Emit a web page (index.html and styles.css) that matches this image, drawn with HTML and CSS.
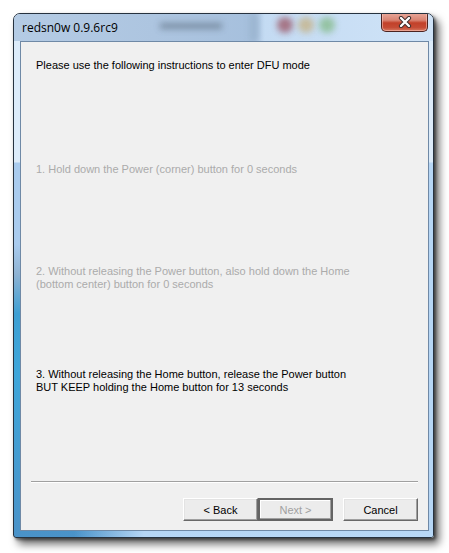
FILE: index.html
```html
<!DOCTYPE html>
<html>
<head>
<meta charset="utf-8">
<link rel="stylesheet" href="styles.css">
</head>
<body>
<div class="window">
  <div class="titlebar">
    <div class="glass">
      <span class="blur-stripe"></span>
      <span class="blur-text"></span>
      <span class="blur-dot dot-r"></span>
      <span class="blur-dot dot-y"></span>
      <span class="blur-dot dot-g"></span>
    </div>
    <span class="title">redsn0w 0.9.6rc9</span>
    <div class="close">
      <svg width="18" height="12" viewBox="0 0 18 12">
        <path d="M5 2 L13 10 M13 2 L5 10" stroke="#3b2a2a" stroke-width="4.2" stroke-linecap="round"/>
        <path d="M5 2 L13 10 M13 2 L5 10" stroke="#ffffff" stroke-width="2.4" stroke-linecap="round"/>
      </svg>
    </div>
  </div>
  <div class="client">
    <p class="line intro">Please use the following instructions to enter DFU mode</p>
    <p class="line step1 dim">1. Hold down the Power (corner) button for 0 seconds</p>
    <p class="line step2 dim">2. Without releasing the Power button, also hold down the Home<br>(bottom center) button for 0 seconds</p>
    <p class="line step3">3. Without releasing the Home button, release the Power button<br>BUT KEEP holding the Home button for 13 seconds</p>
    <div class="spacer"></div>
    <div class="sep"></div>
    <div class="buttons">
      <button class="btn">&lt; Back</button>
      <button class="btn default" disabled>Next &gt;</button>
      <button class="btn cancel">Cancel</button>
    </div>
  </div>
</div>
</body>
</html>
```

FILE: styles.css
```css
html, body {
  margin: 0;
  padding: 0;
  background: #ffffff;
}
body {
  width: 449px;
  height: 553px;
  overflow: hidden;
}
.window {
  position: relative;
  margin: 13px 0 0 13px;
  width: 421px;
  height: 525px;
  box-sizing: border-box;
  border: 1px solid #26323f;
  border-radius: 7px 7px 3px 3px;
  background:
    linear-gradient(to bottom, #dcebf9 0px, #dcebf9 148px, rgba(0,0,0,0) 149px),
    linear-gradient(to right, rgba(0,0,0,0) 0, rgba(0,0,0,0) 410px, #b6d6f5 410px),
    linear-gradient(to bottom, #a9cbee 0px, #a9cbee 230px, #8fb3d3 260px, #3d9fd3 300px, #3ea6da 360px, #4a92c8 100%);
  box-shadow: 5px 6px 8px rgba(0,0,0,0.6), 2px 2px 3px rgba(0,0,0,0.45);
  display: flex;
  flex-direction: column;
}
.window::after {
  content: "";
  position: absolute;
  left: 60px;
  right: 0;
  bottom: 0;
  height: 6px;
  background: linear-gradient(to right, rgba(180,215,245,0) 0, #b5d6f5 70px, #b8d8f6 100%);
  border-radius: 0 0 2px 0;
}
.titlebar {
  position: relative;
  height: 27px;
  flex: none;
  border-radius: 6px 6px 0 0;
  overflow: hidden;
  background: linear-gradient(to right, #b4cbe4 0, #adc5e0 140px, #a6c0dd 240px, #c4dbf3 250px, #cfe3f7 100%);
}
.glass {
  position: absolute;
  inset: 0;
}
.blur-stripe {
  position: absolute;
  left: 236px;
  top: 0;
  width: 8px;
  height: 27px;
  background: #9bb4cf;
  filter: blur(3px);
}
.blur-text {
  position: absolute;
  left: 146px;
  top: 9px;
  width: 62px;
  height: 6px;
  background: #6f8296;
  filter: blur(3px);
  opacity: 0.8;
}
.blur-dot {
  position: absolute;
  top: 3px;
  width: 16px;
  height: 16px;
  border-radius: 50%;
  filter: blur(3px);
  opacity: 0.9;
}
.dot-r { left: 263px; background: #a26a7a; }
.dot-y { left: 284px; background: #c6b894; }
.dot-g { left: 305px; background: #8fc09a; }
.title {
  position: absolute;
  left: 8px;
  top: 6px;
  font-family: "Open Sans", "Noto Sans", sans-serif;
  font-size: 12px;
  line-height: 15px;
  color: #000000;
}
.close {
  position: absolute;
  right: 5px;
  top: -1px;
  width: 45px;
  height: 18px;
  border: 1px solid #4b2320;
  border-top: none;
  border-radius: 0 0 5px 5px;
  background: linear-gradient(to bottom, #e9a99b 0, #d98372 40%, #c2412a 55%, #c54b35 80%, #d77a62 100%);
  box-shadow: inset 0 0 0 1px rgba(255,210,200,0.5);
  display: flex;
  align-items: center;
  justify-content: center;
}
.client {
  flex: 1;
  margin: 0 4px 6px 6px;
  border: 1px solid #6f89a6;
  background: #f0f0f0;
  display: flex;
  flex-direction: column;
  padding: 0 10px 9px 15px;
  font-family: "Liberation Sans", Arial, sans-serif;
  font-size: 11px;
  line-height: 13px;
  color: #000000;
}
.line {
  margin: 0;
  white-space: nowrap;
}
.dim {
  color: #ababab;
}
.intro { margin-top: 17px; }
.step1 { margin-top: 91px; }
.step2 { margin-top: 89px; }
.step3 { margin-top: 77px; }
.spacer { flex: 1; }
.sep {
  margin: 0 0 0 -5px;
  height: 1px;
  background: #a0a0a0;
  border-bottom: 1px solid #ffffff;
}
.buttons {
  margin-top: 15px;
  display: flex;
  justify-content: flex-end;
}
.btn {
  width: 75px;
  height: 23px;
  box-sizing: border-box;
  margin: 0;
  padding: 0;
  font-family: "Liberation Sans", Arial, sans-serif;
  font-size: 11px;
  color: #000000;
  background: #ececec;
  border: 1px solid;
  border-color: #ffffff #696969 #696969 #ffffff;
  box-shadow: inset -1px -1px 0 #a0a0a0, inset 1px 1px 0 #e3e3e3;
}
.btn.default {
  color: #a0a0a0;
  border: 2px solid;
  border-color: #646464;
  box-shadow: inset -1px -1px 0 #a0a0a0, inset 1px 1px 0 #ffffff;
}
.btn.cancel {
  margin-left: 10px;
}
```
